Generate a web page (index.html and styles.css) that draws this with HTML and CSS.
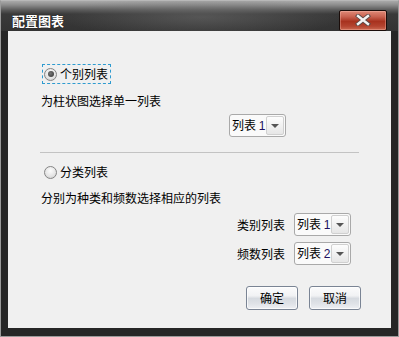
FILE: index.html
```html
<!DOCTYPE html>
<html lang="zh">
<head>
<meta charset="utf-8">
<link rel="stylesheet" href="styles.css">
</head>
<body>
<div class="window">
  <div class="titlebar">
    <span class="title">配置图表</span>
    <div class="close">
      <svg width="18" height="12" viewBox="0 0 18 12"><path d="M4 2 L14 10 M14 2 L4 10" stroke="#5a4a48" stroke-width="4.2" stroke-linecap="square"/><path d="M4 2 L14 10 M14 2 L4 10" stroke="#f4f4f4" stroke-width="2.4" stroke-linecap="square"/></svg>
    </div>
  </div>
  <div class="client">
    <div class="radio-row">
      <div class="focus">
        <span class="radio checked"></span>
        <span class="rlabel">个别列表</span>
      </div>
    </div>
    <div class="desc d1">为柱状图选择单一列表</div>
    <div class="combo-line c1">
      <div class="combo"><span class="ctext">列表 <span class="num">1</span></span><span class="drop"><span class="tri"></span></span></div>
    </div>
    <div class="sep"></div>
    <div class="radio-row r2">
      <div class="nofocus">
        <span class="radio"></span>
        <span class="rlabel">分类列表</span>
      </div>
    </div>
    <div class="desc d2">分别为种类和频数选择相应的列表</div>
    <div class="field-row f1">
      <span class="flabel">类别列表</span>
      <div class="combo"><span class="ctext">列表 <span class="num">1</span></span><span class="drop"><span class="tri"></span></span></div>
    </div>
    <div class="field-row f2">
      <span class="flabel">频数列表</span>
      <div class="combo"><span class="ctext">列表 <span class="num">2</span></span><span class="drop"><span class="tri"></span></span></div>
    </div>
    <div class="buttons">
      <div class="btn">确定</div>
      <div class="btn">取消</div>
    </div>
  </div>
</div>
</body>
</html>
```
FILE: styles.css
```css
html, body { margin: 0; padding: 0; }
body {
  width: 399px; height: 337px; overflow: hidden;
  font-family: "Noto Sans CJK SC", "Noto Sans", sans-serif;
  font-size: 12px; color: #000;
  background: #222;
}
.window {
  box-sizing: border-box;
  width: 399px; height: 337px;
  border: 1px solid #9a9a9a;
  border-top-color: #b8b8b8;
  background: #262626;
  display: flex; flex-direction: column;
}
.titlebar {
  height: 30px;
  display: flex; align-items: center; justify-content: space-between;
  padding: 0 11px 0 11px;
  background:
    radial-gradient(ellipse 140px 22px at 200px 16px, rgba(120,120,120,0.45), rgba(120,120,120,0) 100%),
    linear-gradient(#a9a9a9 0px, #8c8c8c 4px, #5a5a5a 9px, #3a3a3a 13px, #333 30px);
  flex: none;
}
.title {
  color: #fff; font-weight: bold; font-size: 13px;
  margin-top: 9px;
  text-shadow: 0 0 1px #000;
}
.close {
  box-sizing: border-box;
  width: 48px; height: 21px;
  margin-top: 8px;
  border: 1px solid #1a0d0a;
  border-radius: 2px;
  background: linear-gradient(#e08a78 0%, #c96250 30%, #a8321f 55%, #b44430 80%, #cc6a52 100%);
  box-shadow: inset 0 0 0 1px rgba(255,200,190,0.35);
  display: flex; align-items: center; justify-content: center;
}
.client {
  box-sizing: border-box;
  margin: 0 7px;
  height: 297px;
  background: #f0f0f0;
  padding: 33px 0 0 33px;
  flex: none;
}
.radio-row { height: 20px; display: flex; align-items: center; }
.focus, .nofocus {
  box-sizing: border-box;
  height: 20px;
  display: flex; align-items: center;
  padding: 0 2px 0 1px;
  margin-left: 1px;
}
.focus { border: 1px dashed #2e9bd0; }
.nofocus { border: 1px solid transparent; }
.radio {
  box-sizing: border-box;
  width: 13px; height: 13px; border-radius: 50%;
  border: 1px solid #858585;
  background: radial-gradient(circle at 50% 35%, #fdfdfd 0%, #e4e4e4 60%, #c8c8c8 100%);
  display: inline-flex; align-items: center; justify-content: center;
  margin-right: 3px;
}
.radio.checked::after {
  content: ""; width: 6px; height: 6px; border-radius: 50%;
  background: radial-gradient(circle at 40% 40%, #777, #333);
}
.rlabel { line-height: 16px; }
.desc { line-height: 16px; }
.d1 { margin-top: 9px; }
.combo-line { display: flex; justify-content: flex-end; padding-right: 105px; margin-top: 5px; }
.combo {
  box-sizing: border-box;
  width: 57px; height: 23px;
  border: 1px solid #a9a9a9; border-radius: 3px;
  background: #fafafa;
  display: flex; align-items: center; justify-content: space-between;
  padding: 0 1px 0 2px;
}
.ctext { line-height: 16px; white-space: nowrap; font-size: 12px; }
.num { font-family: "Liberation Sans", sans-serif; color: #201060; }
.drop {
  box-sizing: border-box;
  width: 18px; height: 19px;
  border: 1px solid #d0d0d0; border-radius: 2px;
  background: linear-gradient(#fdfdfd, #e6e6e6);
  display: flex; align-items: center; justify-content: center;
}
.tri {
  width: 0; height: 0;
  border-left: 4px solid transparent; border-right: 4px solid transparent;
  border-top: 4px solid #555;
}
.sep {
  height: 1px; background: #c3c3c3;
  margin: 15px 32px 0 -1px;
}
.r2 { margin-top: 9px; }
.d2 { margin-top: 8px; }
.field-row {
  display: flex; align-items: center; justify-content: flex-end;
  padding-right: 40px;
  gap: 9px;
}
.f1 { margin-top: 7px; }
.f2 { margin-top: 6px; }
.buttons {
  display: flex; justify-content: flex-end; gap: 11px;
  padding-right: 30px; margin-top: 21px;
}
.btn {
  box-sizing: border-box;
  width: 52px; height: 24px;
  border: 1px solid #7a8494; border-radius: 3px;
  background: linear-gradient(#fbfbfc 0%, #f1f2f4 40%, #d6dae0 52%, #dfe2e7 75%, #eef0f3 100%);
  box-shadow: inset 0 0 0 1px rgba(255,255,255,0.7);
  display: flex; align-items: center; justify-content: center;
  line-height: 16px;
}
```
